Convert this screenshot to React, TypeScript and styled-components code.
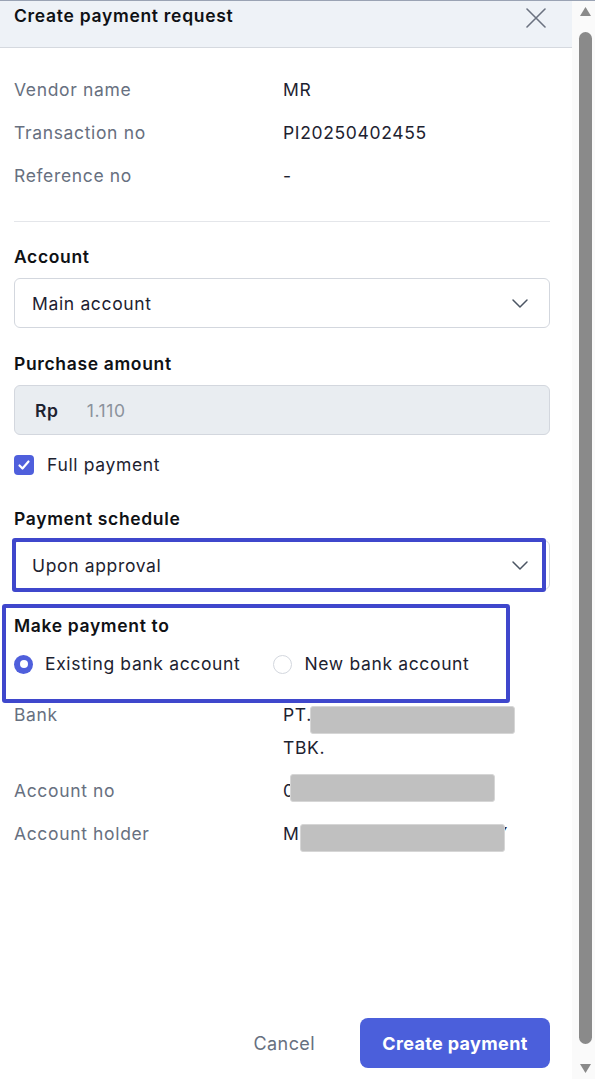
import React from "react";
import styled, { createGlobalStyle } from "styled-components";

const Global = createGlobalStyle`
  html, body { margin: 0; padding: 0; background: #ffffff; }
  body { font-family: Inter, "Noto Sans", sans-serif; -webkit-font-smoothing: antialiased; letter-spacing: 0.65px; }
  * { box-sizing: border-box; }
`;

const Page = styled.div`
  display: flex;
  width: 595px;
  height: 1079px;
  overflow: hidden;
  border-top: 1px solid #9aa3b4;
`;

const Panel = styled.div`
  width: 572px;
  display: flex;
  flex-direction: column;
  background: #fff;
`;

const Header = styled.div`
  height: 47px;
  background: #eef2f7;
  border-bottom: 1px solid #d5d9df;
  display: flex;
  align-items: flex-start;
  justify-content: space-between;
  padding: 3px 26px 0 14px;
`;

const Title = styled.h1`
  margin: 0;
  font-size: 17.5px;
  line-height: 24px;
  font-weight: 600;
  letter-spacing: 0.7px;
  color: #0f1115;
`;

const CloseButton = styled.button`
  border: 0;
  background: none;
  padding: 0;
  margin-top: 4px;
  width: 20px;
  height: 20px;
  display: flex;
  cursor: pointer;
`;

const Body = styled.div`
  padding: 30px 22px 0 14px;
  display: flex;
  flex-direction: column;
  flex: 1;
`;

const InfoList = styled.div<{ $mt?: number }>`
  display: grid;
  grid-template-columns: 269px 1fr;
  row-gap: 19px;
  margin-top: ${(p) => p.$mt ?? 0}px;
`;

const InfoLabel = styled.div`
  font-size: 17.5px;
  line-height: 24px;
  color: #677080;
`;

const InfoValue = styled.div`
  position: relative;
  font-size: 17.5px;
  line-height: 24px;
  color: #1d2230;
  display: flex;
  flex-direction: column;
  gap: 9px;
`;

const Redact = styled.span<{ $left: number; $top: number }>`
  position: absolute;
  left: ${(p) => p.$left}px;
  top: ${(p) => p.$top}px;
  width: 205px;
  height: 28px;
  background: #c0c0c0;
  border: 1px solid #d6d6d6;
  border-radius: 3px;
`;

const Divider = styled.hr`
  border: 0;
  border-top: 1px solid #e4e6ea;
  margin: 33px 0 0;
`;

const FieldLabel = styled.div<{ $mt: number }>`
  margin-top: ${(p) => p.$mt}px;
  font-size: 17.5px;
  line-height: 24px;
  font-weight: 600;
  color: #0f1115;
`;

const Field = styled.div`
  position: relative;
  margin-top: 9px;
`;

const SelectBox = styled.div`
  height: 50px;
  border: 1px solid #d3d7de;
  border-radius: 6px;
  background: #fff;
  display: flex;
  align-items: center;
  justify-content: space-between;
  padding: 0 20px 0 17px;
  font-size: 17.5px;
  color: #1d2230;
`;

const AmountBox = styled.div`
  height: 50px;
  border: 1px solid #d3d7de;
  border-radius: 6px;
  background: #e9edf1;
  display: flex;
  align-items: center;
  gap: 28px;
  padding: 0 0 0 20px;
  font-size: 17.5px;
`;

const Currency = styled.span`
  font-weight: 600;
  color: #1d2230;
`;

const Amount = styled.span`
  color: #8b929c;
`;

const CheckRow = styled.label`
  margin-top: 18px;
  display: flex;
  align-items: center;
  gap: 13px;
  font-size: 17.5px;
  line-height: 24px;
  color: #1d2230;
`;

const CheckBox = styled.span`
  width: 20px;
  height: 20px;
  border-radius: 4px;
  background: #4f5fdc;
  display: flex;
  align-items: center;
  justify-content: center;
`;

const Highlight = styled.div<{ $l: number; $t: number; $w: number; $h: number }>`
  position: absolute;
  left: ${(p) => p.$l}px;
  top: ${(p) => p.$t}px;
  width: ${(p) => p.$w}px;
  height: ${(p) => p.$h}px;
  border: 4px solid #3f47cc;
  border-radius: 3px;
  pointer-events: none;
`;

const Section = styled.div`
  position: relative;
  margin-top: 24px;
`;

const SectionLabel = styled.div`
  font-size: 17.5px;
  line-height: 24px;
  font-weight: 600;
  color: #0f1115;
`;

const RadioGroup = styled.div`
  margin-top: 14px;
  display: flex;
  gap: 33px;
`;

const RadioOption = styled.label`
  display: flex;
  align-items: center;
  gap: 12px;
  font-size: 17.5px;
  line-height: 24px;
  color: #1d2230;
`;

const RadioDot = styled.span<{ $on?: boolean }>`
  width: 19px;
  height: 19px;
  border-radius: 50%;
  background: ${(p) => (p.$on ? "#4f5fdc" : "#fff")};
  border: ${(p) => (p.$on ? "0" : "1.5px solid #d3d7de")};
  display: flex;
  align-items: center;
  justify-content: center;
  &::after {
    content: "";
    display: ${(p) => (p.$on ? "block" : "none")};
    width: 8px;
    height: 8px;
    border-radius: 50%;
    background: #fff;
  }
`;

const Footer = styled.div`
  display: flex;
  justify-content: flex-end;
  align-items: center;
  gap: 21px;
  padding: 0 22px 11px 14px;
`;

const CancelButton = styled.button`
  border: 0;
  background: none;
  height: 50px;
  padding: 0 24px;
  font-family: inherit;
  font-size: 18px;
  letter-spacing: 0.4px;
  color: #677080;
`;

const PrimaryButton = styled.button`
  border: 0;
  height: 50px;
  width: 190px;
  border-radius: 8px;
  background: #4b5fdb;
  color: #fff;
  font-family: inherit;
  font-size: 18px;
  letter-spacing: 0.35px;
  font-weight: 700;
`;

const ScrollTrack = styled.div`
  width: 23px;
  background: #fafafa;
  display: flex;
  flex-direction: column;
  align-items: center;
  padding: 6px 0 6px 4px;
`;

const Thumb = styled.div`
  width: 13px;
  flex: 1;
  margin: 16px 0 20px;
  border-radius: 7px;
  background: #8a8a8a;
`;

const Chevron = () => (
  <svg width="18" height="18" viewBox="0 0 18 18" fill="none">
    <path d="M2 6l7 7 7-7" stroke="#4b5563" strokeWidth="1.5" strokeLinecap="round" strokeLinejoin="round" />
  </svg>
);

const Arrow = ({ down }: { down?: boolean }) => (
  <svg width="11" height="9" viewBox="0 0 11 9">
    <path d={down ? "M0 0h11L5.5 9z" : "M5.5 0L11 9H0z"} fill="#8a8a8a" />
  </svg>
);

export default function App() {
  return (
    <>
      <Global />
      <Page>
        <Panel>
          <Header>
            <Title>Create payment request</Title>
            <CloseButton aria-label="Close">
              <svg width="20" height="20" viewBox="0 0 20 20" fill="none">
                <path d="M1 1l18 18M19 1L1 19" stroke="#6b7280" strokeWidth="1.6" strokeLinecap="round" />
              </svg>
            </CloseButton>
          </Header>
          <Body>
            <InfoList>
              <InfoLabel>Vendor name</InfoLabel>
              <InfoValue>MR</InfoValue>
              <InfoLabel>Transaction no</InfoLabel>
              <InfoValue>PI20250402455</InfoValue>
              <InfoLabel>Reference no</InfoLabel>
              <InfoValue>-</InfoValue>
            </InfoList>
            <Divider />

            <FieldLabel $mt={23}>Account</FieldLabel>
            <Field>
              <SelectBox>
                <span>Main account</span>
                <Chevron />
              </SelectBox>
            </Field>

            <FieldLabel $mt={24}>Purchase amount</FieldLabel>
            <Field>
              <AmountBox>
                <Currency>Rp</Currency>
                <Amount>1.110</Amount>
              </AmountBox>
            </Field>

            <CheckRow>
              <CheckBox>
                <svg width="14" height="14" viewBox="0 0 14 14" fill="none">
                  <path d="M2.5 7.5l3 3 6-7" stroke="#fff" strokeWidth="2.2" strokeLinecap="round" strokeLinejoin="round" />
                </svg>
              </CheckBox>
              Full payment
            </CheckRow>

            <FieldLabel $mt={30}>Payment schedule</FieldLabel>
            <Field>
              <SelectBox>
                <span>Upon approval</span>
                <Chevron />
              </SelectBox>
              <Highlight $l={-2} $t={-2} $w={534} $h={54} />
            </Field>

            <Section>
              <SectionLabel>Make payment to</SectionLabel>
              <RadioGroup>
                <RadioOption>
                  <RadioDot $on />
                  Existing bank account
                </RadioOption>
                <RadioOption>
                  <RadioDot />
                  New bank account
                </RadioOption>
              </RadioGroup>
              <Highlight $l={-12} $t={-10} $w={508} $h={99} />
            </Section>

            <InfoList $mt={27}>
              <InfoLabel>Bank</InfoLabel>
              <InfoValue>
                <span>PT.</span>
                <span>TBK.</span>
                <Redact $left={27} $top={3} />
              </InfoValue>
              <InfoLabel>Account no</InfoLabel>
              <InfoValue>
                <span>0</span>
                <Redact $left={7} $top={-5} />
              </InfoValue>
              <InfoLabel>Account holder</InfoLabel>
              <InfoValue>
                <span>M<span style={{ marginLeft: 196 }}>Y</span></span>
                <Redact $left={17} $top={2} />
              </InfoValue>
            </InfoList>
          </Body>
          <Footer>
            <CancelButton>Cancel</CancelButton>
            <PrimaryButton>Create payment</PrimaryButton>
          </Footer>
        </Panel>
        <ScrollTrack>
          <Arrow />
          <Thumb />
          <Arrow down />
        </ScrollTrack>
      </Page>
    </>
  );
}
